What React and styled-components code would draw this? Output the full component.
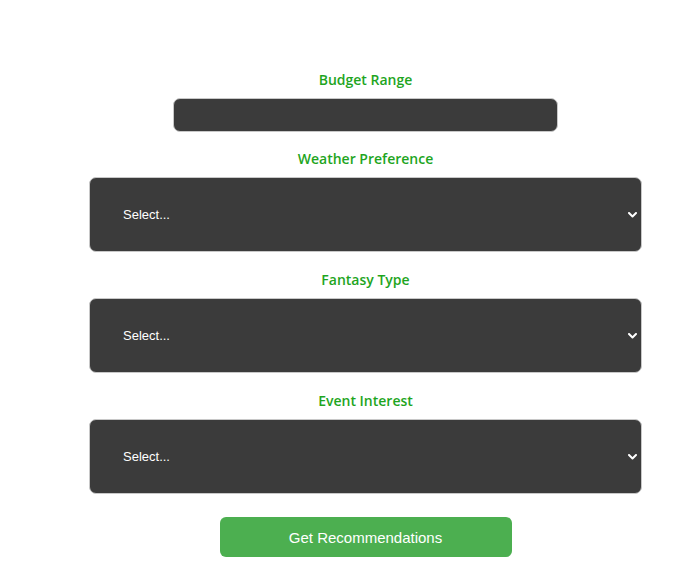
import React from "react";
import styled, { createGlobalStyle } from "styled-components";

const GlobalStyle = createGlobalStyle`
    body {
        margin: 0;
        background: #ffffff;
        font-family: "Liberation Sans", Arial, sans-serif;
    }
`;

const Page = styled.div`
    width: 696px;
    box-sizing: border-box;
    padding: 70px 0 0 35px;
    display: flex;
    flex-direction: column;
    align-items: center;
`;

const Field = styled.div`
    display: flex;
    flex-direction: column;
    align-items: center;
    margin-bottom: ${(p) => p.$gap || 18}px;
`;

const Label = styled.label`
    font-family: "Open Sans", "Noto Sans", sans-serif;
    font-weight: 600;
    font-size: 14px;
    line-height: 20px;
    color: #1ea51e;
    margin-bottom: 8px;
`;

const BudgetInput = styled.input`
    box-sizing: border-box;
    width: 385px;
    height: 34px;
    background: #3b3b3b;
    border: 1px solid #c8c8c8;
    border-radius: 7px;
    color: #fff;
    outline: none;
    padding: 0 10px;
`;

const SelectWrap = styled.div`
    position: relative;
    width: 553px;
    height: 75px;
`;

const Select = styled.select`
    appearance: none;
    box-sizing: border-box;
    width: 100%;
    height: 100%;
    background: #3b3b3b;
    border: 1px solid #c8c8c8;
    border-radius: 7px;
    color: #fff;
    font-family: "Liberation Sans", Arial, sans-serif;
    font-size: 13px;
    padding: 0 0 0 33px;
    outline: none;
`;

const Chevron = styled.svg`
    position: absolute;
    right: 5px;
    top: 35px;
    width: 9px;
    height: 6px;
    pointer-events: none;
`;

const Button = styled.button`
    width: 292px;
    height: 40px;
    background: #4caf50;
    color: #fff;
    border: none;
    border-radius: 6px;
    font-family: "Liberation Sans", Arial, sans-serif;
    font-size: 15px;
    cursor: pointer;
`;

const SelectField = ({ label, gap }) => (
    <Field $gap={gap}>
        <Label>{label}</Label>
        <SelectWrap>
            <Select defaultValue="">
                <option value="">Select...</option>
            </Select>
            <Chevron viewBox="0 0 9 6">
                <path d="M1 1l3.5 3.5L8 1" fill="none" stroke="#fff" strokeWidth="2" strokeLinecap="round" strokeLinejoin="round" />
            </Chevron>
        </SelectWrap>
    </Field>
);

export default function App() {
    return (
        <>
            <GlobalStyle />
            <Page>
                <Field $gap={17}>
                    <Label>Budget Range</Label>
                    <BudgetInput type="text" />
                </Field>
                <SelectField label="Weather Preference" />
                <SelectField label="Fantasy Type" />
                <SelectField label="Event Interest" gap={23} />
                <Button>Get Recommendations</Button>
            </Page>
        </>
    );
}
